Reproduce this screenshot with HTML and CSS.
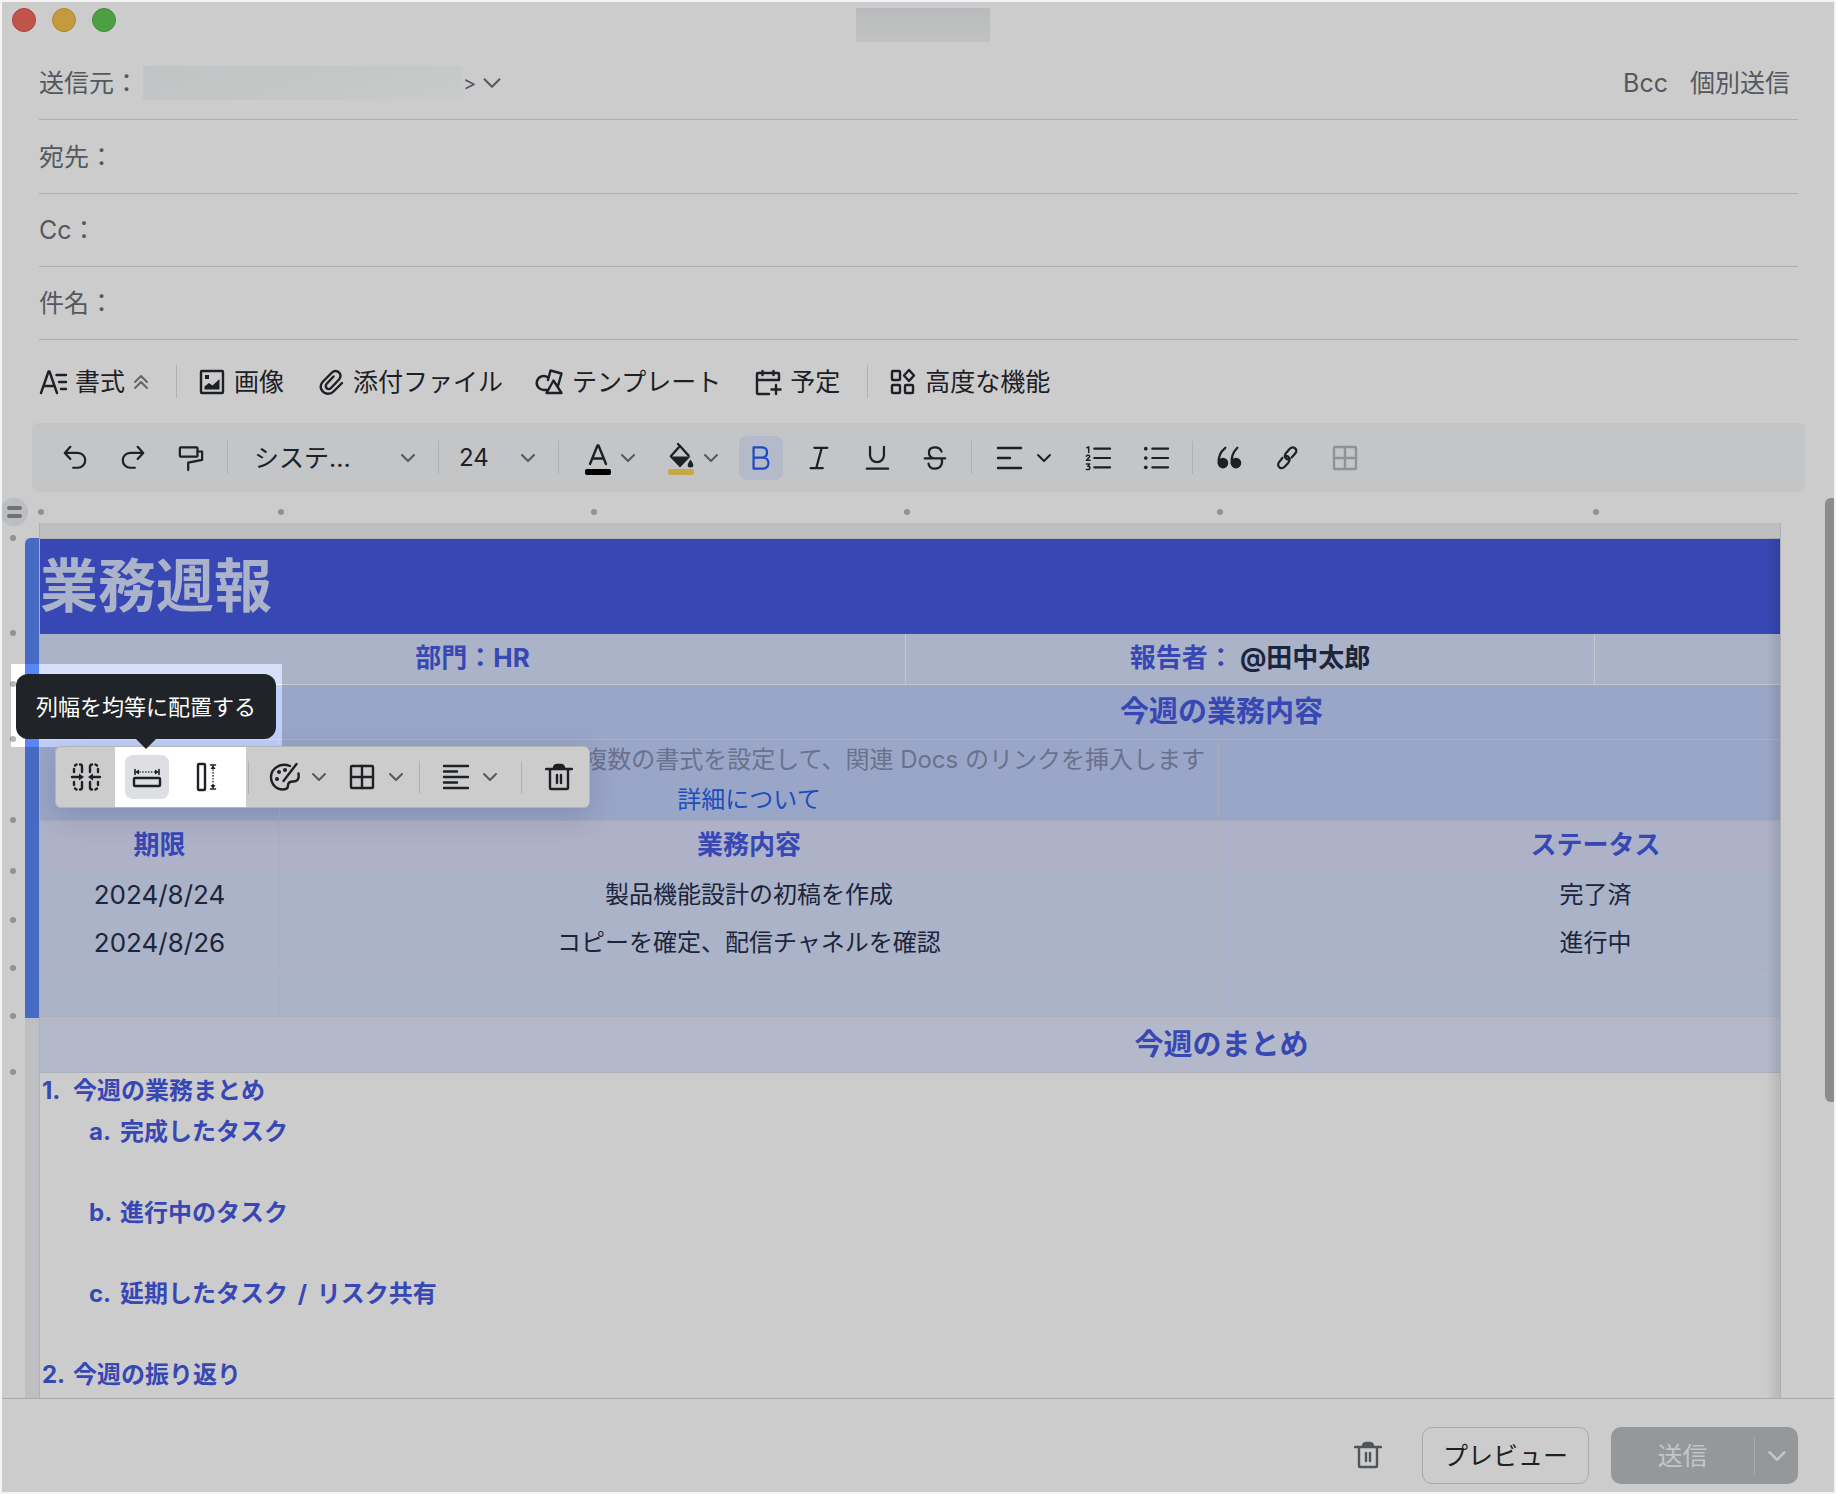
FILE: index.html
```html
<!DOCTYPE html>
<html lang="ja">
<head>
<meta charset="utf-8">
<title>メール作成</title>
<link rel="stylesheet" href="styles.css">
</head>
<body>
<svg class="sprite" aria-hidden="true">
  <symbol id="chev" viewBox="0 0 16 16"><path d="M2 5l6 6 6-6"/></symbol>
  <symbol id="table" viewBox="0 0 28 28"><rect x="3" y="3" width="22" height="22" rx="1"/><path d="M14 3v22M3 14h22"/></symbol>
  <symbol id="trash" viewBox="0 0 28 28"><path d="M1 6h26M5 7v18a1 1 0 001 1h16a1 1 0 001-1V7M12 12v8M16 12v8"/><path class="solid" d="M9 5a3 3 0 013-3h4a3 3 0 013 3z"/></symbol>
</svg>
<main class="window">
  <header class="titlebar">
    <div class="lights"><i class="light light-red"></i><i class="light light-yellow"></i><i class="light light-green"></i></div>
    <div class="title-mask"></div>
  </header>

  <section class="fields">
    <div class="field">
      <span class="field-label">送信元：</span>
      <button class="sender" type="button" aria-label="送信元を選択"><span class="sender-mask"></span><span class="sender-end">&gt;</span><svg class="icon sender-chev"><use href="#chev"/></svg></button>
      <div class="field-actions"><button type="button">Bcc</button><button type="button">個別送信</button></div>
    </div>
    <div class="field"><label class="field-label" for="to">宛先：</label><input id="to" type="text"></div>
    <div class="field"><label class="field-label" for="cc">Cc：</label><input id="cc" type="text"></div>
    <div class="field"><label class="field-label" for="subject">件名：</label><input id="subject" type="text"></div>
  </section>

  <nav class="insert-bar">
    <button type="button">
      <svg class="icon" viewBox="0 0 28 28"><path d="M2 25L9.500 3.500h1L18 25M5 18h10M17.500 7H27M20 14h7M22 21h5"/></svg>書式<svg class="icon icon-fold" viewBox="0 0 16 16"><path d="M2 8l6-6 6 6M2 14l6-6 6 6"/></svg>
    </button>
    <i class="sep"></i>
    <button type="button"><svg class="icon" viewBox="0 0 28 28"><rect x="3" y="3" width="22" height="22" rx="1"/><path class="shape" d="M6.500 21.500v-3l4.500-3.500 3.500 2.500L21.500 11v10.500zM7 7h4v4H7z"/></svg>画像</button>
    <button type="button"><svg class="icon" viewBox="0 0 28 28"><path d="M25 15l-8.500 8.500a7.500 7.500 0 01-11.500-1c-2-3-1.300-6.500 1-9L15 4.500a5 5 0 017.500.5c1.500 2 1 4.500-.5 6.500l-8 8.500a3 3 0 01-4.500-4l7-7.500"/></svg>添付ファイル</button>
    <button type="button"><svg class="icon" viewBox="0 0 28 28"><path d="M12 9.500A7 7 0 108.500 22h2.500M12 12l2.500-9.500 11 3L22 18M17.500 12.500L25.500 25h-15z"/></svg>テンプレート</button>
    <button type="button"><svg class="icon" viewBox="0 0 28 28"><path d="M15 26H4a1 1 0 01-1-1V6a1 1 0 011-1h20a1 1 0 011 1v6H3M8.500 3v4M19.500 3v4M22 17v9M17.500 21.500h9"/></svg>予定</button>
    <i class="sep"></i>
    <button type="button"><svg class="icon" viewBox="0 0 28 28"><rect x="3" y="3" width="8" height="9" rx="1"/><rect x="3" y="17" width="8" height="8" rx="1"/><rect x="16" y="17" width="8" height="8" rx="1"/><path d="M20 2l5 5.500-5 5.500-5-5.500z"/></svg>高度な機能</button>
  </nav>

  <div class="format-bar">
    <button class="tool" type="button" aria-label="元に戻す"><svg class="icon" viewBox="0 0 28 28"><path d="M9 2L3 8.500 9 15M3 8.500h14a8 8 0 010 16h-5"/></svg></button>
    <button class="tool" type="button" aria-label="やり直す"><svg class="icon" viewBox="0 0 28 28"><path d="M19 2l6 6.500-6 6.500M25 8.500H11a8 8 0 000 16h5"/></svg></button>
    <button class="tool" type="button" aria-label="書式のコピー"><svg class="icon" viewBox="0 0 28 28"><rect x="2" y="2.500" width="19" height="10" rx="1"/><path d="M21 7h5v9l-15 3v8"/></svg></button>
    <i class="sep"></i>
    <label class="picker picker-font"><select aria-label="フォント"><option>システ...</option></select><svg class="icon icon-chev"><use href="#chev"/></svg></label>
    <i class="sep"></i>
    <label class="picker picker-size"><select aria-label="文字サイズ"><option>24</option></select><svg class="icon icon-chev"><use href="#chev"/></svg></label>
    <i class="sep"></i>
    <button class="split" type="button" aria-label="文字色"><svg class="icon" viewBox="0 0 28 28"><path d="M6 20L13.500 1.500h1L22 20M8.500 14.500h11"/><rect class="ink" x="1" y="25" width="26" height="6" rx="2"/></svg><svg class="icon icon-chev"><use href="#chev"/></svg></button>
    <button class="split" type="button" aria-label="背景色"><svg class="icon" viewBox="0 0 28 28"><path d="M11 0l2 2M4 12L13 2l8.500 9.500"/><path class="shape" d="M2.500 12.500h21L13 23.500z"/><path class="shape" d="M23.500 15.500c3.500 4.500 4 8 0 8s-3.500-3.500 0-8z"/><rect class="marker" x="1" y="25" width="26" height="6" rx="2"/></svg><svg class="icon icon-chev"><use href="#chev"/></svg></button>
    <button class="tool tool-on" type="button" aria-label="太字"><svg class="icon" viewBox="0 0 28 28"><path d="M6 2.500v23M6 2.500h8.500c3.500 0 6 2 6 5.500s-2.500 5.500-6 5.500H6M14 13.500h2c3.500 0 6 2.500 6 6s-2.500 6-6 6H6"/></svg></button>
    <button class="tool" type="button" aria-label="斜体"><svg class="icon" viewBox="0 0 28 28"><path d="M9 3h14M5 25h13M17 3l-6 22"/></svg></button>
    <button class="tool" type="button" aria-label="下線"><svg class="icon" viewBox="0 0 28 28"><path d="M6.500 2v9a7.500 7.500 0 0015 0V2M3 25.500h23"/></svg></button>
    <button class="tool" type="button" aria-label="取り消し線"><svg class="icon" viewBox="0 0 28 28"><path d="M21 7c-1-3-3.500-4.500-7-4.500-4 0-6.500 2-6.500 5.500 0 2.500 1.500 5 4 6M3 14.500h22M21 14.500c2 5.500-1 11-7 11-4 0-6.500-2-7-5.500"/></svg></button>
    <i class="sep"></i>
    <button class="split split-wide" type="button" aria-label="配置"><svg class="icon" viewBox="0 0 28 28"><path d="M2 4h23M2 14h12M2 24h23"/></svg><svg class="icon icon-chev"><use href="#chev"/></svg></button>
    <button class="tool" type="button" aria-label="番号付きリスト"><svg class="icon" viewBox="0 0 28 28"><path d="M10 4h17M10 14h17M10 24h17"/><path class="thin" d="M2 3l2-1v6M1.500 12c1-1.500 4-1 3.500.5 0 1-2 2-3.500 4h4M1.500 20.500h3.500l-2 2.500c3 0 3 3.500 0 3.500H1.500"/></svg></button>
    <button class="tool" type="button" aria-label="箇条書き"><svg class="icon" viewBox="0 0 28 28"><path d="M10 4h17M10 14h17M10 24h17"/><circle class="shape" cx="3" cy="4" r="2"/><circle class="shape" cx="3" cy="14" r="2"/><circle class="shape" cx="3" cy="24" r="2"/></svg></button>
    <i class="sep"></i>
    <button class="tool" type="button" aria-label="引用"><svg class="icon" viewBox="0 0 28 28"><path d="M3 20C2 12 5 7 10 3M17 20c-1-8 2-13 6-17"/><circle class="solid" cx="7.500" cy="19.500" r="4.500"/><circle class="solid" cx="21.500" cy="19.500" r="4.500"/></svg></button>
    <button class="tool" type="button" aria-label="リンク"><svg class="icon" viewBox="0 0 28 28"><path d="M19 13.500l4-4.500c3.500-4.500-2.500-8.500-6-5l-4 4.500c-3 4 0 8 4 7M9 14l-3.500 4.500c-3.500 4.500 2.500 8.500 6 5l4-4.500c3-4 0-8-4-7"/></svg></button>
    <button class="tool tool-off" type="button" aria-label="表"><svg class="icon icon-table"><use href="#table"/></svg></button>
  </div>

  <section class="editor">
    <div class="ruler">
      <i class="col-w240"></i><i class="col-w313"></i><i class="col-w313"></i><i class="col-w313"></i><i class="col-w376"></i><i class="col-w378"></i>
    </div>
    <button class="handle" type="button" aria-label="ブロックメニュー"></button>
    <div class="doc">
      <div class="gutter">
        <i class="row-title"></i><i class="row-sub"></i><i class="row-head"></i><i class="row-desc"></i><i class="row-sub"></i><i class="row-item"></i><i class="row-line"></i><i class="row-line"></i><i class="row-sum"></i><i></i>
      </div>
      <div class="rowbar"><i class="rowbar-on"></i></div>
      <div class="sheet">
        <table class="report">
          <colgroup><col class="col-w240"><col class="col-w313"><col class="col-w313"><col class="col-w313"><col class="col-w376"><col class="col-w378"><col class="col-w430"></colgroup>
          <tbody>
            <tr class="row-title"><td colspan="7">業務週報</td></tr>
            <tr class="row-sub report-meta"><td colspan="3">部門：HR</td><td colspan="2">報告者： <span class="mention">@田中太郎</span></td><td colspan="2"></td></tr>
            <tr class="row-head report-section"><td colspan="7">今週の業務内容</td></tr>
            <tr class="row-desc report-desc"><td></td><td colspan="3"><p class="hint">複数の書式を設定して、関連 Docs のリンクを挿入します</p><a href="#details">詳細について</a></td><td colspan="3"></td></tr>
            <tr class="row-sub report-cols"><td>期限</td><td colspan="3">業務内容</td><td colspan="2">ステータス</td><td></td></tr>
            <tr class="row-item report-item"><td class="date">2024/8/24</td><td colspan="3">製品機能設計の初稿を作成</td><td colspan="2">完了済</td><td></td></tr>
            <tr class="row-line report-item ruled"><td class="date">2024/8/26</td><td colspan="3">コピーを確定、配信チャネルを確認</td><td colspan="2">進行中</td><td></td></tr>
            <tr class="row-line ruled"><td></td><td colspan="3"></td><td colspan="2"></td><td></td></tr>
            <tr class="row-sum report-section"><td colspan="7">今週のまとめ</td></tr>
            <tr class="report-notes"><td colspan="7">
              <ol class="notes">
                <li><span class="num">1.</span>今週の業務まとめ
                  <ol class="subnotes">
                    <li><span class="num">a.</span>完成したタスク</li>
                    <li><span class="num">b.</span>進行中のタスク</li>
                    <li><span class="num">c.</span>延期したタスク <span class="slash">/</span> リスク共有</li>
                  </ol>
                </li>
                <li><span class="num">2.</span>今週の振り返り</li>
              </ol>
            </td></tr>
          </tbody>
        </table>
      </div>
    </div>
    <div class="scroll-thumb"></div>

    <div class="spotlight"></div>
    <div class="table-bar" role="toolbar" aria-label="表の操作">
      <button class="tool" type="button" aria-label="セルの結合"><svg class="icon" viewBox="0 0 28 28"><path d="M2 9V6M3 2.500l1.500-1M8 1.500a2 2 0 012 2V9M26 9V6M25 2.500l-1.500-1M20 1.500a2 2 0 00-2 2V9M2 19v3M3 25.500l1.500 1M8 26.500a2 2 0 002-2V19M26 19v3M25 25.500l-1.500 1M20 26.500a2 2 0 01-2-2V19M0 14h7M28 14h-7"/><path class="shape" d="M7 10.500l5 3.500-5 3.500zM21 10.500L16 14l5 3.500z"/></svg></button>
      <div class="focus-group">
        <button class="tool tool-hover" type="button" aria-label="列幅を均等に配置する" aria-describedby="tip"><svg class="icon" viewBox="0 0 28 28"><rect x="1" y="15" width="26" height="8" rx="1"/><path class="dots" d="M7 9h15"/><path class="thin" d="M2 6.500v5M26 6.500v5"/><path class="shape" d="M2 9l4-2.500v5zM26 9l-4-2.500v5z"/></svg></button>
        <button class="tool" type="button" aria-label="行の高さを均等に配置する"><svg class="icon" viewBox="0 0 28 28"><rect x="5" y="1" width="7" height="26" rx="1"/><path class="dots" d="M20 7v15"/><path class="thin" d="M17.500 2h5M17.500 26h5"/><path class="shape" d="M20 2l-2.500 4h5zM20 26l-2.500-4h5z"/></svg></button>
      </div>
      <i class="sep sep-tight"></i>
      <button class="split" type="button" aria-label="セルの色"><svg class="icon" viewBox="0 0 28 28"><path d="M19 3C9-1 0 6 0 14c0 7 5 12.500 12 12.500 4 0 5-2 5-4 0-3 2-4 5-4 4 0 6.500-2 5.500-8M25.500 1L12.500 18"/><circle class="shape" cx="8" cy="9" r="2"/><circle class="shape" cx="14" cy="7" r="2"/><circle class="shape" cx="6" cy="16" r="2"/></svg><svg class="icon icon-chev"><use href="#chev"/></svg></button>
      <button class="split" type="button" aria-label="罫線"><svg class="icon"><use href="#table"/></svg><svg class="icon icon-chev"><use href="#chev"/></svg></button>
      <i class="sep"></i>
      <button class="split" type="button" aria-label="セル内の配置"><svg class="icon" viewBox="0 0 28 28"><path d="M2 3h24M2 8.500h13M2 14h24M2 19.500h13M2 25h24"/></svg><svg class="icon icon-chev"><use href="#chev"/></svg></button>
      <i class="sep sep-loose"></i>
      <button class="bare" type="button" aria-label="表を削除"><svg class="icon"><use href="#trash"/></svg></button>
    </div>
    <div class="tooltip" role="tooltip" id="tip">列幅を均等に配置する</div>
  </section>

  <footer class="footer">
    <button class="bare discard" type="button" aria-label="下書きを削除"><svg class="icon"><use href="#trash"/></svg></button>
    <button class="preview" type="button">プレビュー</button>
    <div class="send"><button class="send-main" type="button">送信</button><button class="send-more" type="button" aria-label="送信オプション"><svg class="icon send-chev"><use href="#chev"/></svg></button></div>
  </footer>
</main>
</body>
</html>
```

FILE: styles.css
```css
* { box-sizing: border-box; }

body {
  margin: 0;
  padding: 2px;
  background: #f4f4f4;
  color: #1d2024;
  font: 25px/36px Inter, "Noto Sans CJK JP", sans-serif;
}

button, input, select {
  margin: 0;
  padding: 0;
  border: 0;
  background: none;
  color: inherit;
  font: inherit;
}

i { font-style: normal; }
.sprite { display: none; }

.icon {
  display: block;
  flex: none;
  width: 28px;
  height: 28px;
  overflow: visible;
  fill: none;
  stroke: currentColor;
  stroke-width: 2.4;
  stroke-linecap: round;
  stroke-linejoin: round;
}
.solid { fill: currentColor; }
.icon .shape { fill: currentColor; stroke: none; }
.icon .thin { stroke-width: 1.6; }
.icon .dots { stroke-width: 1.6; stroke-dasharray: 0.1 2.8; }
.icon .ink { fill: #000; stroke: none; }
.icon .marker { fill: #c6a849; stroke: none; }
.icon-chev { width: 16px; height: 16px; color: #55585e; stroke-width: 2; }
.icon-fold { width: 16px; height: 16px; color: #63666c; stroke-width: 2; }

.window {
  display: flex;
  flex-direction: column;
  height: calc(100vh - 4px);
  overflow: hidden;
  background: #ccc;
}

/* Title bar */
.titlebar {
  display: grid;
  grid-template-columns: 1fr auto 1fr;
  align-items: start;
  flex: none;
  height: 44px;
  padding: 6px 0 0 10px;
}
.lights { display: flex; gap: 16px; }
.light { width: 24px; height: 24px; border-radius: 50%; border: 1px solid; }
.light-red { background: #c0544b; border-color: #ab4038; }
.light-yellow { background: #c49a3e; border-color: #b08630; }
.light-green { background: #4d9f43; border-color: #3d8b35; }
.title-mask { width: 134px; height: 34px; background: linear-gradient(#b9babd, #c1c3c2); }

/* Address fields */
.fields { flex: none; padding: 0 36px 0 37px; color: #55585e; }
.field {
  display: flex;
  align-items: center;
  height: 73px;
  border-bottom: 1px solid #aeaeae;
}
.field:nth-child(-n+2) { height: 74px; }
.field input { flex: 1; min-width: 0; outline: 0; }
.sender { display: flex; align-items: center; margin-left: 4px; font-size: 20px; }
.sender-mask { width: 320px; height: 34px; background: linear-gradient(160deg, #c1c3c4, #c9caca); }
.sender-end { margin-right: 6px; }
.sender-chev { width: 20px; height: 20px; stroke-width: 1.6; }
.field-actions { display: flex; gap: 22px; margin-left: auto; padding-right: 8px; }

.sep { flex: none; width: 1px; height: 33px; background: #b0b1b3; }

/* Insert bar */
.insert-bar {
  display: flex;
  flex: none;
  align-items: center;
  gap: 33px;
  height: 83px;
  padding: 0 37px;
}
.insert-bar button { display: flex; align-items: center; gap: 8px; }
.insert-bar .sep { margin: 0 -12px 0 -6px; }

/* Format bar */
.format-bar {
  display: flex;
  flex: none;
  align-items: center;
  gap: 14px;
  height: 69px;
  margin: 0 29px 0 30px;
  padding: 0 21px;
  border-radius: 6px;
  background: #c4c5c7;
}
.tool {
  display: flex;
  flex: none;
  align-items: center;
  justify-content: center;
  width: 44px;
  height: 44px;
  border-radius: 8px;
}
.format-bar .tool .icon { width: 26px; height: 26px; }
.format-bar .tool .icon-table { width: 28px; height: 28px; }
.format-bar .tool-on { background: #b4bac9; color: #1f49c4; }
.tool-off { color: #909296; }
.split { display: flex; flex: none; align-items: center; gap: 8px; padding: 0 6px 0 11px; }
.split-wide { gap: 12px; padding: 0 10px; }
.split-wide .icon-chev { color: inherit; }
.picker { display: grid; align-items: center; padding-right: 8px; }
.picker select { grid-area: 1 / 1; width: 100%; appearance: none; }
.picker .icon { grid-area: 1 / 1; justify-self: end; pointer-events: none; }
.picker-font { width: 182px; padding-left: 12px; }
.picker-size { width: 91px; padding-left: 6px; font-size: 24px; }

/* Editor */
.editor { position: relative; display: flex; flex: 1; flex-direction: column; min-height: 0; overflow: hidden; }
.ruler { display: flex; flex: none; height: 31px; margin: 0 53px 0 36px; overflow: hidden; }
.ruler i { flex: none; }
.ruler i::before {
  display: block;
  width: 6px;
  height: 6px;
  margin-top: 17px;
  border-radius: 50%;
  background: #8f9296;
  content: "";
}
.handle {
  position: absolute;
  top: 6px;
  left: -2px;
  display: grid;
  place-content: center;
  gap: 4px;
  width: 28px;
  height: 28px;
  border-radius: 50%;
  background: #bcbec1;
}
.handle::before, .handle::after { width: 15px; height: 4px; border-radius: 2px; background: #6d7278; content: ""; }

.doc { display: flex; flex: 1; min-height: 0; }
.gutter { flex: none; width: 23px; padding-top: 16px; }
.gutter i { position: relative; display: block; }
.gutter i::before {
  position: absolute;
  top: -4px;
  left: 8px;
  width: 6px;
  height: 6px;
  border-radius: 50%;
  background: #8f9296;
  content: "";
}
.rowbar { flex: none; width: 14px; margin-top: 15px; background: #bebfc2; }
.rowbar-on { display: block; height: 480px; border-radius: 6px 0 0 0; background: #476ac4; }
.sheet {
  position: relative;
  flex: 1;
  min-width: 0;
  margin-right: 53px;
  border: 1px solid #b0b0b1;
  border-width: 0 1px;
  overflow: hidden;
}
.sheet::before { display: block; height: 15px; border-bottom: 1px solid #b0b0b1; background: #bebfc1; content: ""; }
.sheet::after {
  position: absolute;
  top: 15px;
  right: 0;
  bottom: 0;
  width: 14px;
  background: linear-gradient(90deg, transparent, rgba(0, 0, 0, .1));
  content: "";
}

.col-w240 { width: 240px; }
.col-w313 { width: 313px; }
.col-w376 { width: 376px; }
.col-w378 { width: 378px; }
.col-w430 { width: 430px; }
.row-title { height: 95px; }
.row-sub { height: 51px; }
.row-head { height: 55px; }
.row-desc { height: 81px; }
.row-item { height: 49px; }
.row-line { height: 48px; }
.row-sum { height: 56px; }

.report {
  width: 2363px;
  border-spacing: 0;
  table-layout: fixed;
  background: #abb3c9;
  color: #1b253b;
  font-size: 24px;
  text-align: center;
}
.report td { padding: 0; border: 0 solid #acb0bb; border-width: 0 1px 0 0; }
.report .row-title td { padding-bottom: 2px; background: #3747b4; color: #abb3ca; font-size: 58px; font-weight: 700; line-height: 80px; text-align: left; }
.report .report-meta td { padding-bottom: 2px; border-color: #c6c7cb; border-width: 0 1px 1px 0; color: #3747b4; font-size: 26px; font-weight: 700; }
.report .mention { color: #1b253b; }
.report .report-section td { border-width: 0 0 1px; color: #3747b4; font-size: 29px; font-weight: 700; }
.row-head td, .report-desc td { background: #9aa6c8; }
.report .report-desc td { border-color: #a9adba; border-width: 0 1px 1px 0; line-height: 40px; vertical-align: top; }
.report-desc a { color: #1d4dbd; text-decoration: none; }
.hint { margin: 0; padding-right: 13px; color: #69728c; text-align: right; }
.report .report-cols td { padding-bottom: 3px; background: #adb2c8; color: #3747b4; font-size: 26px; font-weight: 700; }
.report .report-item td { padding-bottom: 4px; }
.report .date { font-size: 26px; }
.report .ruled td { border-width: 0 1px 1px 0; }
.row-sum td { background: #b3b9ca; }
.report .report-notes td { padding-left: 2px; border: 0; background: #ccc; color: #3747b4; font-weight: 700; text-align: left; vertical-align: top; }
.notes, .subnotes { margin: 0; padding: 0; list-style: none; }
.num { display: inline-block; width: 31px; }
.slash { margin: 0 4px; }
.notes > li + li { margin-top: 45px; }
.subnotes { padding-left: 47px; }
.subnotes li { margin-top: 5px; }
.subnotes li + li { margin-top: 45px; }

.scroll-thumb {
  position: absolute;
  top: 6px;
  right: 0;
  width: 9px;
  height: 604px;
  border-radius: 6px 0 0 6px;
  background: #8c8c8c;
}

/* Highlighted area behind the tooltip */
.spotlight {
  position: absolute;
  top: 172px;
  left: 9px;
  width: 271px;
  height: 83px;
  backdrop-filter: brightness(1.25);
}

.table-bar {
  position: absolute;
  top: 254px;
  left: 53px;
  display: flex;
  align-items: center;
  height: 62px;
  padding: 0 16px 0 8px;
  border: 1px solid #b4b5b7;
  border-radius: 6px;
  background: #ccc;
  box-shadow: 0 8px 30px rgba(30, 40, 70, .18);
}
.table-bar .tool .icon { width: 28px; height: 28px; }
.focus-group {
  display: flex;
  align-items: center;
  align-self: stretch;
  gap: 16px;
  margin-left: 7px;
  padding: 0 17px 0 10px;
  background: #fff;
}
.tool-hover { background: #dedfe2; }
.table-bar .split { gap: 12px; padding: 0; }
.table-bar .split + .split { margin-left: 21px; }
.table-bar .sep { margin: 0 22px 0 15px; }
.table-bar .sep-tight { margin-left: 2px; }
.table-bar .sep-loose { margin: 0 23px; }

.tooltip {
  position: absolute;
  top: 182px;
  left: 14px;
  padding: 15px 20px 14px;
  border-radius: 12px;
  background: #202328;
  color: #fff;
  font-size: 22px;
  white-space: nowrap;
}
.tooltip::after {
  position: absolute;
  top: 100%;
  left: 50%;
  width: 20px;
  height: 10px;
  margin-left: -10px;
  background: inherit;
  clip-path: polygon(0 0, 100% 0, 50% 100%);
  content: "";
}

/* Footer */
.footer {
  display: flex;
  flex: none;
  align-items: flex-start;
  justify-content: flex-end;
  height: 94px;
  padding: 28px 36px 0 0;
  border-top: 1px solid #a9a9a9;
}
.discard { margin: 14px 40px 0 0; color: #50555c; }
.preview { width: 167px; height: 57px; margin-right: 22px; border: 1px solid #a8a9aa; border-radius: 10px; }
.send { display: flex; align-items: center; height: 57px; border-radius: 10px; background: #94989b; color: #c3c5c6; }
.send-main { width: 144px; height: 36px; border-right: 1px solid #a9acae; }
.send-more { display: grid; place-items: center; width: 43px; height: 57px; }
.send-chev { width: 20px; height: 20px; stroke-width: 2; }
```
